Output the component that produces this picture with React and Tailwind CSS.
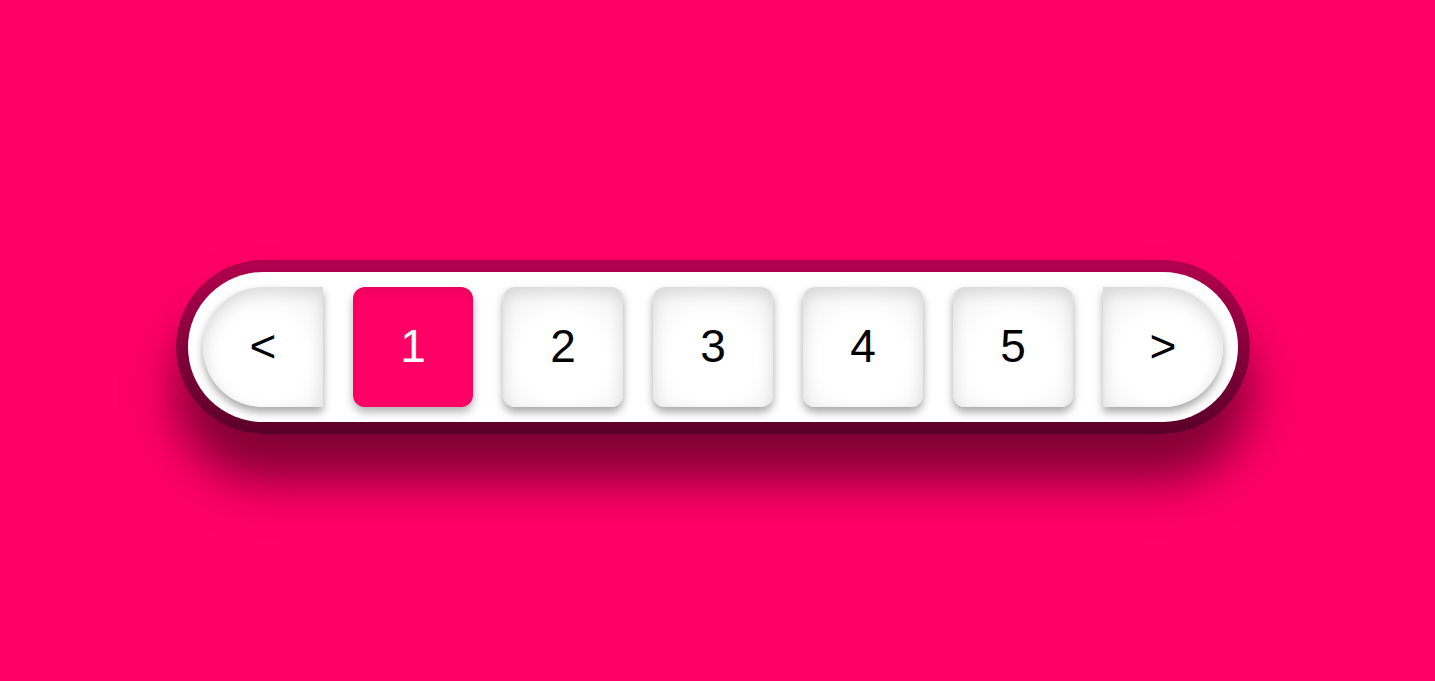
import React from "react";

const btnBase =
  "w-[120px] h-[120px] flex items-center justify-center pb-[3px] text-[46px] leading-none text-black shadow-[inset_0_6px_16px_rgba(0,0,0,0.12),0_5px_8px_rgba(0,0,0,0.35)] bg-[radial-gradient(circle_at_50%_60%,#ffffff_45%,#f1f1f1_100%)]";

export default function App() {
  return (
    <div
      className="w-full h-screen bg-[#ff0066] flex items-center justify-center pt-[13px] pr-[9px]"
      style={{ fontFamily: '"Liberation Sans", Arial, sans-serif' }}
    >
      <div className="rounded-full p-[12px] bg-[linear-gradient(to_bottom,#b3004e,#5a0028)] shadow-[0_45px_50px_rgba(0,0,0,0.5)]">
        <div className="rounded-full bg-white p-[15px] flex gap-[30px]">
          <div className={`${btnBase} rounded-l-[60px]`}>&lt;</div>
          <div className="w-[120px] h-[120px] flex items-center justify-center pb-[3px] text-[46px] leading-none text-white rounded-[12px] bg-[#ff0066] shadow-[inset_0_6px_12px_rgba(0,0,0,0.08),0_5px_8px_rgba(0,0,0,0.3)]">
            1
          </div>
          {[2, 3, 4, 5].map((n) => (
            <div key={n} className={`${btnBase} rounded-[12px]`}>
              {n}
            </div>
          ))}
          <div className={`${btnBase} rounded-r-[60px]`}>&gt;</div>
        </div>
      </div>
    </div>
  );
}
